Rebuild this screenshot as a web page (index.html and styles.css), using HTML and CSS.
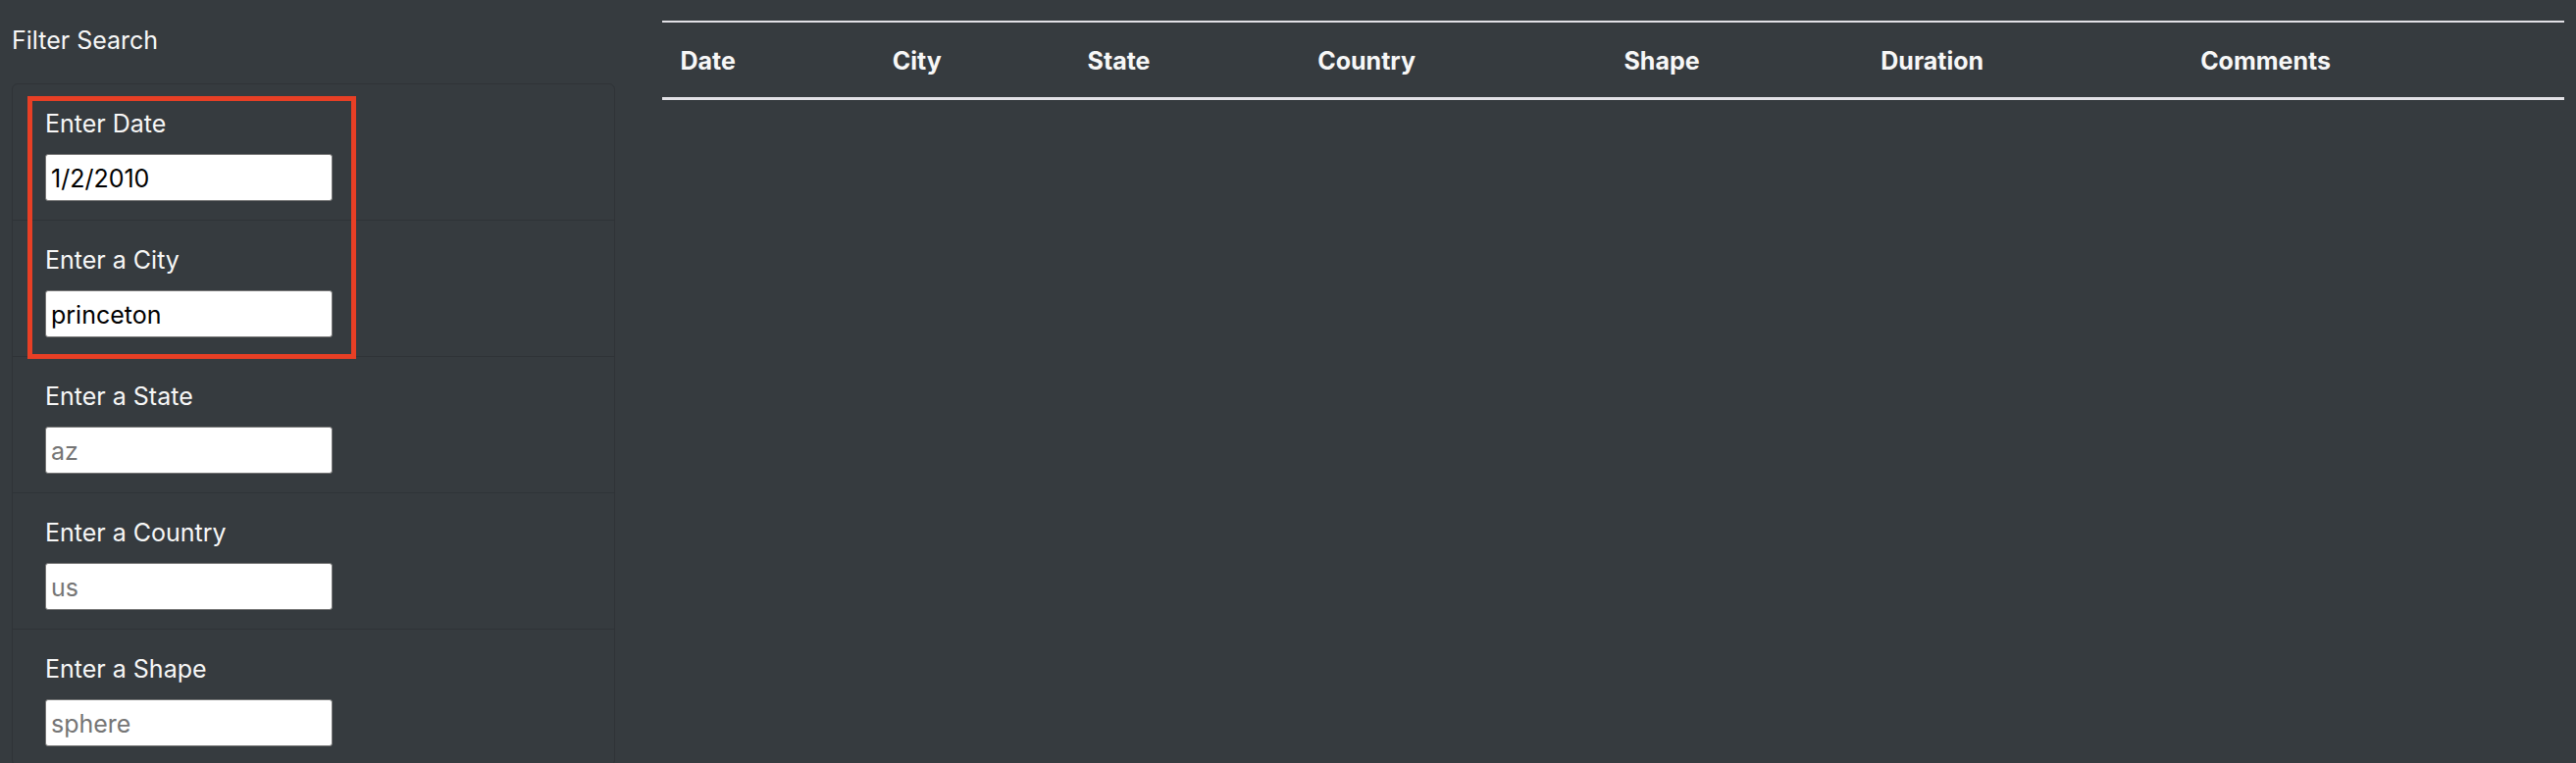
FILE: index.html
```html
<!DOCTYPE html>
<html lang="en">
<head>
<meta charset="utf-8">
<meta name="viewport" content="width=device-width, initial-scale=1">
<title>Filter Search</title>
<link rel="stylesheet" href="styles.css">
</head>
<body>
<div class="page">
  <aside class="sidebar">
    <form>
      <p class="sidebar-title">Filter Search</p>
      <ul class="filters">
        <li class="filter"><label for="datetime">Enter Date</label><input type="text" id="datetime" value="1/2/2010"></li>
        <li class="filter"><label for="city">Enter a City</label><input type="text" id="city" value="princeton"></li>
        <li class="filter"><label for="state">Enter a State</label><input type="text" id="state" placeholder="az"></li>
        <li class="filter"><label for="country">Enter a Country</label><input type="text" id="country" placeholder="us"></li>
        <li class="filter"><label for="shape">Enter a Shape</label><input type="text" id="shape" placeholder="sphere"></li>
        <li class="highlight" aria-hidden="true"></li>
      </ul>
    </form>
  </aside>
  <main class="results">
    <table class="table">
      <colgroup>
        <col class="col-date"><col class="col-city"><col class="col-state"><col class="col-country"><col class="col-shape"><col class="col-duration"><col class="col-comments">
      </colgroup>
      <thead>
        <tr><th>Date</th><th>City</th><th>State</th><th>Country</th><th>Shape</th><th>Duration</th><th>Comments</th></tr>
      </thead>
      <tbody></tbody>
    </table>
  </main>
</div>
</body>
</html>
```

FILE: styles.css
```css
* { box-sizing: border-box; }

html { scrollbar-width: none; }

body {
  margin: 0;
  background: #363b3f;
  color: #f7f7f7;
  font: 25px/38px Inter, "Liberation Sans", sans-serif;
}

.page {
  display: grid;
  grid-template-columns: 25% 1fr;
}

.sidebar { padding: 22px 30px 0 12px; }

.sidebar-title { margin: 0 0 25px; }

.filters {
  position: relative;
  margin: 0;
  padding: 0;
  list-style: none;
  border: 1px solid #2f3337;
  border-radius: 6px;
}

.filter {
  display: flex;
  flex-direction: column;
  align-items: flex-start;
  gap: 12px;
  padding: 21px 33px 19px;
}

.filter + .filter { border-top: 1px solid #2f3337; }

.filter input {
  width: 293px;
  height: 48px;
  padding: 4px 5px 2px;
  border: 1px solid #767676;
  border-radius: 3px;
  background: #fff;
  color: #000;
  font: inherit;
}

.filter input::placeholder { color: #757575; opacity: 1; }

/* Frame drawn over the filters in use */
.highlight {
  position: absolute;
  top: 12px;
  left: 15px;
  width: 335px;
  height: 268px;
  border: 5px solid #e83f25;
  pointer-events: none;
}

.results { padding: 21px 12px 0 18px; }

.table {
  width: 100%;
  table-layout: fixed;
  border-collapse: separate;
  border-spacing: 0;
}

.table th {
  padding: 20px 19px 18px;
  border-top: 2px solid #e2e1e6;
  border-bottom: 3px solid #e2e1e6;
  text-align: left;
  font-weight: 700;
}

.col-date { width: 11.15%; }
.col-city { width: 10.25%; }
.col-state { width: 12.1%; }
.col-country { width: 16.1%; }
.col-shape { width: 13.5%; }
.col-duration { width: 16.8%; }
```
